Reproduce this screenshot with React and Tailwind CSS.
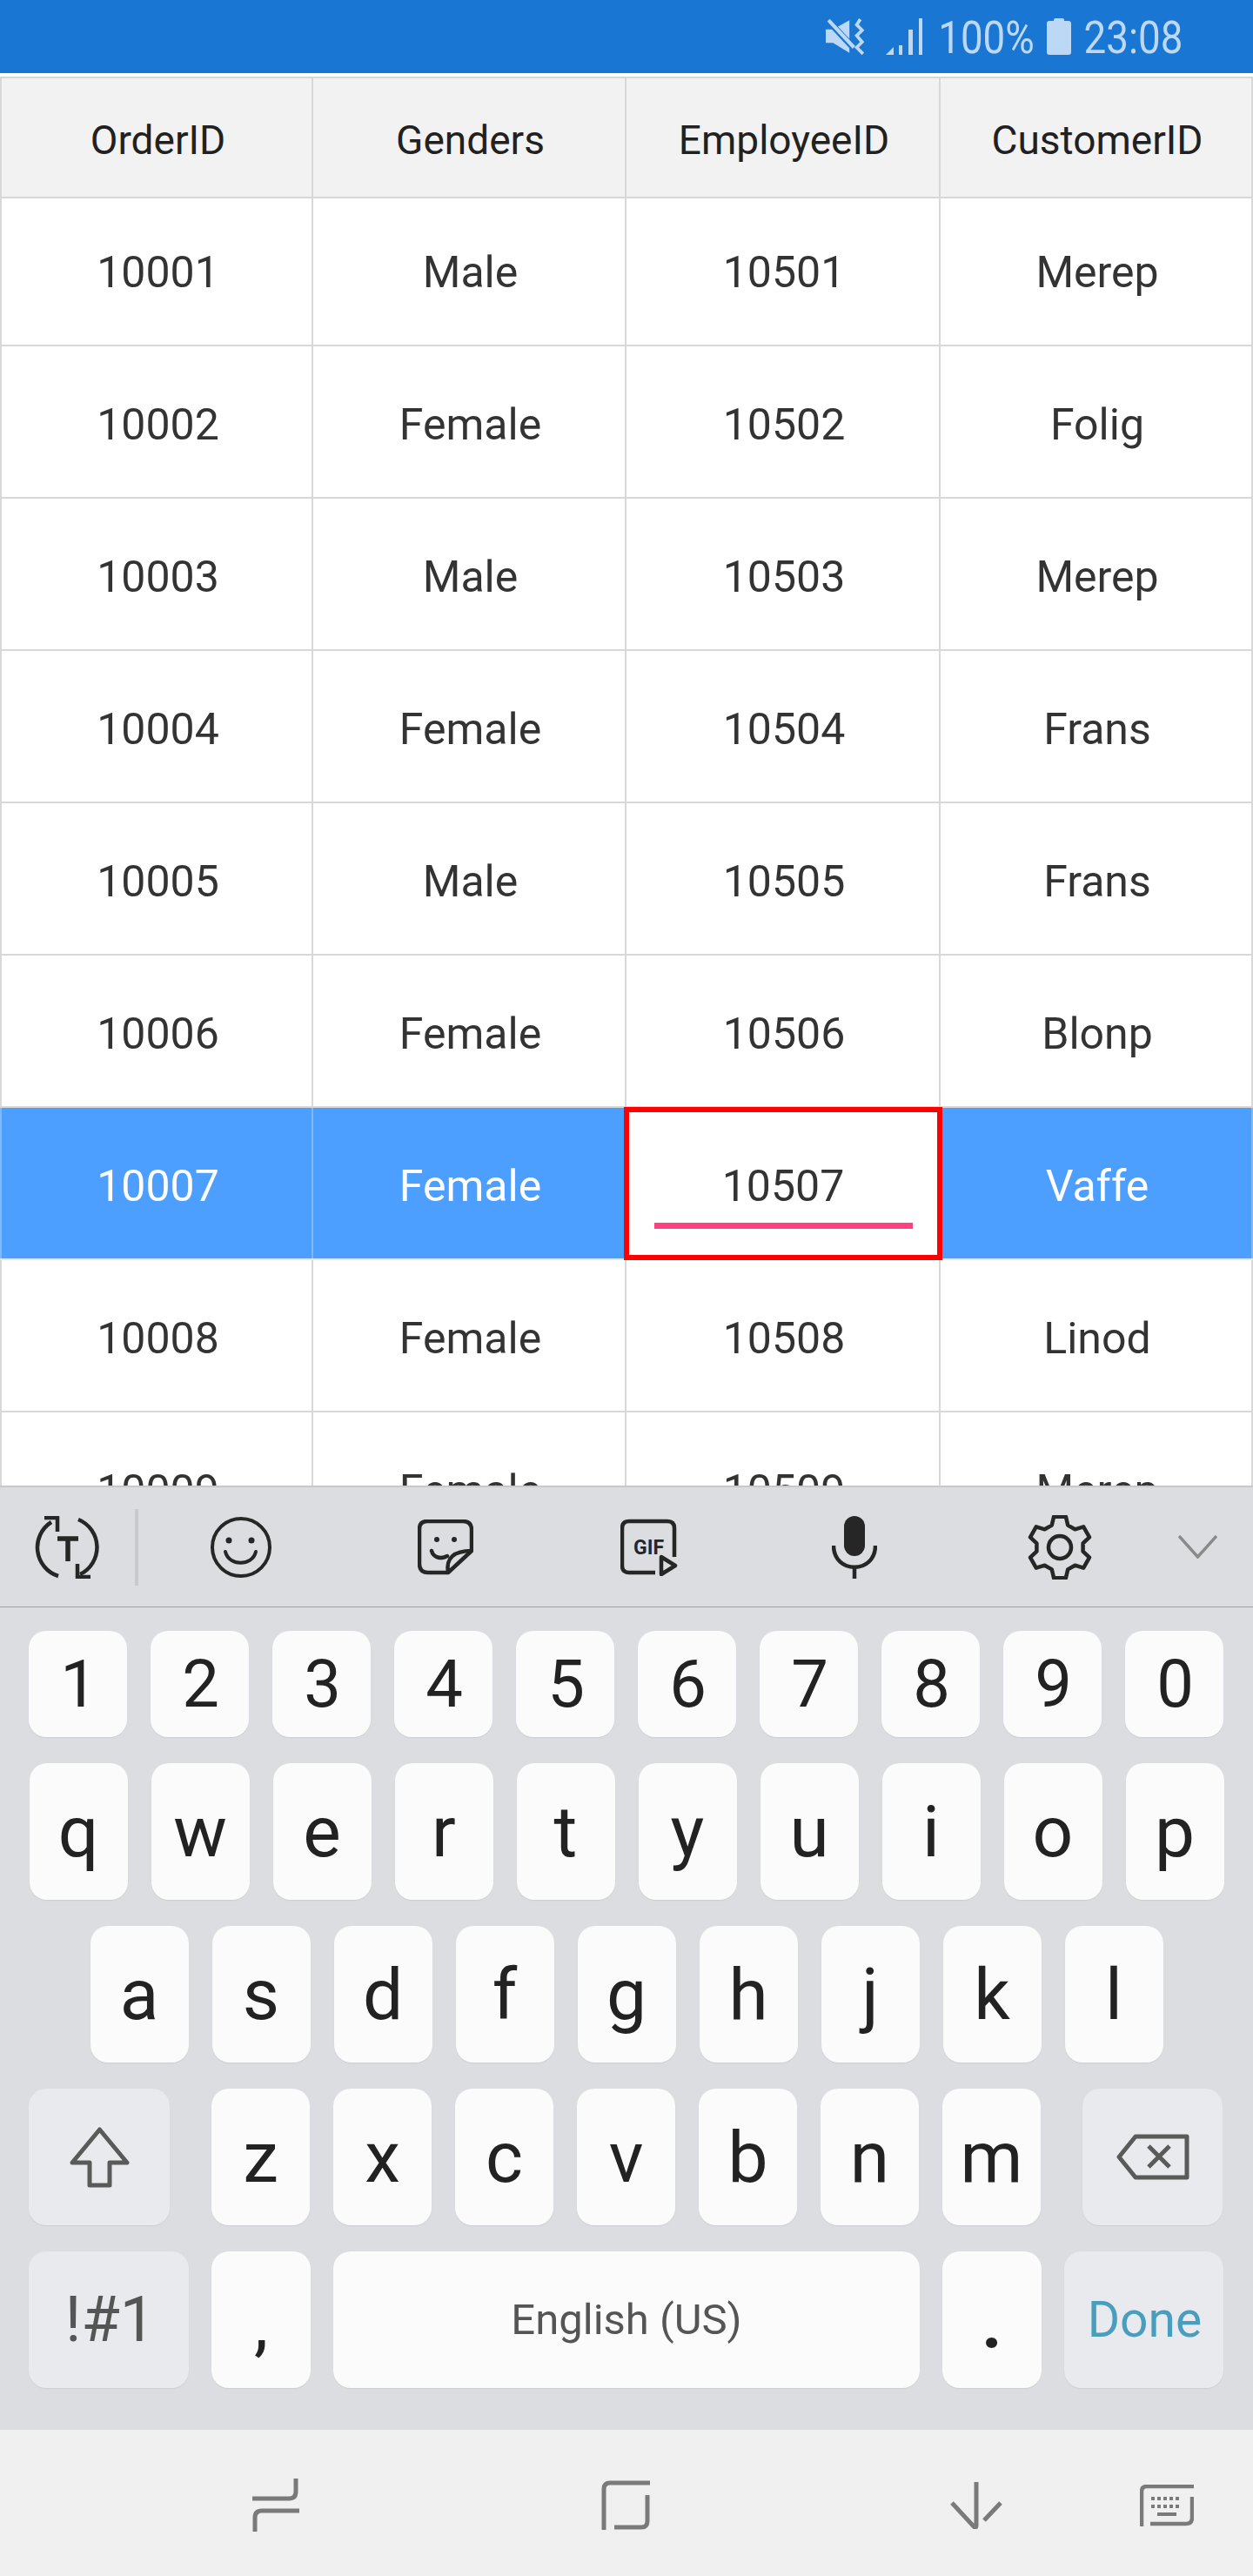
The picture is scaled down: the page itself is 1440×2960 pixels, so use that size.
import React from 'react';

const rows = [
  ['10001', 'Male', '10501', 'Merep'],
  ['10002', 'Female', '10502', 'Folig'],
  ['10003', 'Male', '10503', 'Merep'],
  ['10004', 'Female', '10504', 'Frans'],
  ['10005', 'Male', '10505', 'Frans'],
  ['10006', 'Female', '10506', 'Blonp'],
  ['10007', 'Female', '10507', 'Vaffe'],
  ['10008', 'Female', '10508', 'Linod'],
  ['10009', 'Female', '10509', 'Merep'],
];

const gridCols = 'grid grid-cols-[358px_360px_361px_361px]';

const gearPath = () => {
  const pts = [];
  for (let i = 0; i < 6; i++) {
    const a = -90 + i * 60;
    [[-20, 27], [-11, 36], [11, 36], [20, 27]].forEach(([d, r]) => {
      const t = ((a + d) * Math.PI) / 180;
      pts.push(`${(36 + r * Math.cos(t)).toFixed(1)} ${(37 + r * Math.sin(t)).toFixed(1)}`);
    });
  }
  return `M${pts.join('L')}Z`;
};

const Key = ({ children, className = 'w-[113px] bg-[#fbfbfb]', text = 'text-[82px] text-[#222222]' }) => (
  <div className={`${className} ${text} h-[157px] shrink-0 rounded-[20px] shadow-[0_1px_1px_#cdced2] flex items-center justify-center leading-none`}>
    {children}
  </div>
);

const DigitRow = () => (
  <div className="flex gap-[27px] pl-[33px] mt-[27px]">
    {['1', '2', '3', '4', '5', '6', '7', '8', '9', '0'].map((d) => (
      <div key={d} className="w-[113px] h-[122px] rounded-[20px] bg-[#fbfbfb] shadow-[0_1px_1px_#cdced2] flex items-center justify-center pl-[2px] text-[76px] leading-none text-[#222222]">
        {d}
      </div>
    ))}
  </div>
);

const LetterRow = ({ letters }) => (
  <div className="flex justify-center gap-[27px] mt-[30px]">
    {letters.map((l) => (
      <Key key={l}>{l}</Key>
    ))}
  </div>
);

const StatusBar = () => (
  <div className="h-[84px] bg-[#1976d2] flex items-center justify-end pr-[82px] text-[#bcd8f5]">
    <svg width="46" height="44" viewBox="0 0 44 42" className="mr-[23px]" fill="none">
      <path d="M0 13H8L26 3V39L8 28H0Z" fill="#bcd8f5" />
      <path d="M1 2L33 36" stroke="#1976d2" strokeWidth="7" />
      <path d="M3 3L31 33" stroke="#bcd8f5" strokeWidth="4" />
      <path d="M38 2L34 8L40 14L34 20L40 27L34 33L41 40" stroke="#bcd8f5" strokeWidth="3.5" />
    </svg>
    <svg width="42" height="42" viewBox="0 0 42 42" fill="#bcd8f5" className="mr-[19px]">
      <path d="M0 42L9 33V42Z" />
      <rect x="15" y="31" width="4" height="11" />
      <rect x="26" y="13" width="5" height="29" />
      <rect x="38" y="0" width="4" height="42" />
    </svg>
    <span className="font-['Roboto',sans-serif] text-[52px] leading-none pt-[4px] w-[109px] flex justify-center scale-x-[0.88] whitespace-nowrap">100%</span>
    <svg width="28" height="42" viewBox="0 0 28 42" fill="#bcd8f5" className="ml-[15px] mr-[16px]">
      <path d="M8 2Q8 0 10 0H18Q20 0 20 2V3H25Q28 3 28 6V39Q28 42 25 42H3Q0 42 0 39V6Q0 3 3 3H8Z" />
    </svg>
    <span className="font-['Roboto',sans-serif] text-[52px] leading-none pt-[4px] w-[111px] flex justify-center scale-x-[0.88] whitespace-nowrap">23:08</span>
  </div>
);

const Grid = () => (
  <div className="h-[1623px] overflow-hidden pt-[4px] bg-white">
    <div className={`${gridCols} h-[140px] border-y-2 border-[#d8d8d8] bg-[#f2f2f2] text-[#212121] text-[46px]`}>
      {['OrderID', 'Genders', 'EmployeeID', 'CustomerID'].map((h, i) => (
        <div key={h} className={`flex items-center justify-center pt-[7px] pl-[3px] border-l-2 border-[#d8d8d8] ${i === 3 ? 'border-r-2' : ''}`}>
          {h}
        </div>
      ))}
    </div>
    {rows.map((row, r) => {
      const selected = row[0] === '10007';
      return (
        <div
          key={row[0]}
          className={`${gridCols} ${r === 0 ? 'h-[170px]' : 'h-[175px]'} border-b-2 text-[50px] ${selected ? 'bg-[#4d9fff] text-white border-[#d8e8fa]' : 'bg-white text-[#333333] border-[#d8d8d8]'}`}
        >
          {row.map((cell, i) => (
            <div
              key={i}
              className={`relative flex items-center justify-center pl-[3px] ${r === 0 ? 'pt-[3px]' : 'pt-[8px]'} border-l-2 ${i === 3 ? 'border-r-2' : ''} ${selected ? 'border-[#7fb8fb]' : 'border-[#d8d8d8]'}`}
            >
              {selected && i === 2 ? (
                <div className="absolute -left-[3px] -right-[4px] -top-[1px] -bottom-[2px] z-10 border-[6px] border-[#ff0000] bg-white text-[#333333] flex flex-col items-center">
                  <span className="mt-[55px] leading-[60px]">{cell}</span>
                  <span className="w-[297px] h-[7px] mt-[12px] bg-[#ff4081]" />
                </div>
              ) : (
                cell
              )}
            </div>
          ))}
        </div>
      );
    })}
  </div>
);

const Toolbar = () => (
  <div className="h-[140px] border-t-2 border-b border-t-[#c8c8c8] border-b-[#a3a3a5] flex items-center pl-[40px] text-[#262626]">
    <svg width="74" height="72" viewBox="0 0 74 72" fill="none" stroke="currentColor" strokeWidth="4.5">
      <path d="M19 7A34.5 34.5 0 0 0 27 69" />
      <path d="M11 2H26V18" />
      <path d="M50 4A34.5 34.5 0 0 1 52 67" />
      <path d="M64 70H49V55" />
      <path d="M26 26H50M38 26V52" strokeWidth="5.5" />
    </svg>
    <div className="w-[4px] h-[88px] bg-[#c9c9cd] ml-[41px]" />
    <svg width="72" height="72" viewBox="0 0 72 72" fill="none" stroke="currentColor" strokeWidth="4" className="ml-[82px]">
      <circle cx="36" cy="36" r="33" />
      <circle cx="22" cy="28" r="3.5" fill="currentColor" stroke="none" />
      <circle cx="48" cy="28" r="3.5" fill="currentColor" stroke="none" />
      <path d="M18 41C22 58 49 58 53 41" strokeLinecap="round" />
    </svg>
    <svg width="64" height="64" viewBox="0 0 64 64" fill="none" stroke="currentColor" strokeWidth="4.5" className="ml-[167px]">
      <path d="M11 2H52Q62 2 62 12V36L35 61H12Q2 61 2 51V11Q2 2 11 2Z" strokeLinejoin="round" />
      <path d="M35 61C32 44 42 36 62 36" />
      <circle cx="22" cy="23" r="3" fill="currentColor" stroke="none" />
      <circle cx="42" cy="23" r="3" fill="currentColor" stroke="none" />
      <path d="M16 36C18 44 27 46 34 42" strokeLinecap="round" />
    </svg>
    <svg width="66" height="66" viewBox="0 0 66 66" fill="none" stroke="currentColor" strokeWidth="4.5" className="ml-[169px]">
      <path d="M62 44V11Q62 3 54 3H10Q2 3 2 11V54Q2 62 10 62H40" />
      <path d="M47 44L63 54L47 64Z" strokeLinejoin="round" />
      <text x="15" y="41" fontFamily="Roboto, sans-serif" fontWeight="700" fontSize="23" fill="currentColor" stroke="none">GIF</text>
    </svg>
    <svg width="52" height="72" viewBox="0 0 52 72" fill="none" stroke="currentColor" strokeWidth="4.5" className="ml-[177px]">
      <rect x="14" y="0" width="24" height="46" rx="12" fill="currentColor" stroke="none" />
      <path d="M2 34C2 67 50 67 50 34" />
      <path d="M26 57V72" />
    </svg>
    <svg width="74" height="74" viewBox="0 0 72 74" fill="none" stroke="currentColor" strokeWidth="4.5" className="ml-[173px]">
      <path d={gearPath()} strokeLinejoin="round" />
      <circle cx="36" cy="37" r="13" />
    </svg>
    <svg width="45" height="27" viewBox="0 0 45 27" fill="none" stroke="#8a8a8a" strokeWidth="3.5" className="ml-[99px]">
      <path d="M1 1L22.5 25L44 1" />
    </svg>
  </div>
);

const Keyboard = () => (
  <div className="h-[1085px] bg-[#dcdde1] font-['Roboto',sans-serif]">
    <Toolbar />
    <DigitRow />
    <LetterRow letters={['q', 'w', 'e', 'r', 't', 'y', 'u', 'i', 'o', 'p']} />
    <LetterRow letters={['a', 's', 'd', 'f', 'g', 'h', 'j', 'k', 'l']} />
    <div className="flex mt-[30px] pl-[33px]">
      <Key className="w-[162px] bg-[#e9eaee] mr-[48px]">
        <svg width="69" height="70" viewBox="0 0 69 70" fill="none" stroke="#5a5a5a" strokeWidth="5" strokeLinejoin="round">
          <path d="M34.5 3L66 41H46V67H23V41H3Z" />
        </svg>
      </Key>
      <div className="flex gap-[27px]">
        {['z', 'x', 'c', 'v', 'b', 'n', 'm'].map((l) => (
          <Key key={l}>{l}</Key>
        ))}
      </div>
      <Key className="w-[161px] bg-[#e9eaee] ml-[48px]">
        <svg width="84" height="53" viewBox="0 0 84 53" fill="none" stroke="#5a5a5a" strokeWidth="5" strokeLinejoin="round">
          <path d="M22 3H81V50H22L3 26.5Z" />
          <path d="M37 14L61 38M61 14L37 38" />
        </svg>
      </Key>
    </div>
    <div className="flex gap-[26px] mt-[30px] pl-[33px]">
      <Key className="w-[184px] bg-[#e9eaee] pl-[3px]" text="text-[72px] text-[#555555]">!#1</Key>
      <Key className="w-[114px] bg-[#fbfbfb] pt-[8px]">,</Key>
      <Key className="w-[674px] bg-[#fbfbfb]" text="text-[49px] text-[#555555]">English (US)</Key>
      <Key className="w-[114px] bg-[#fbfbfb] pt-[8px] font-bold">.</Key>
      <Key className="w-[183px] bg-[#e9eaee] pl-[2px]" text="text-[57px] text-[#4a9ebd]">Done</Key>
    </div>
  </div>
);

const NavBar = () => (
  <div className="h-[168px] bg-[#f0f0f0] flex items-start pl-[290px]">
    <svg width="54" height="61" viewBox="0 0 54 61" fill="none" stroke="#7a7a7a" strokeWidth="5" className="mt-[56px]">
      <path d="M50 0V15Q50 23 42 23H0" />
      <path d="M54 37H11Q3 37 3 45V61" />
    </svg>
    <svg width="56" height="57" viewBox="0 0 56 57" fill="none" stroke="#7a7a7a" strokeWidth="5" className="mt-[58px] ml-[347px]">
      <path d="M3 57V10Q3 3 10 3H56" />
      <path d="M53 17V47Q53 54 46 54H15" />
    </svg>
    <svg width="60" height="54" viewBox="0 0 60 54" fill="none" stroke="#7a7a7a" strokeWidth="5" className="mt-[60px] ml-[345px]">
      <path d="M30 0V50Q30 54 27 51L2 24" />
      <path d="M39 44L58 24" />
    </svg>
    <svg width="62" height="48" viewBox="0 0 62 48" fill="none" stroke="#7a7a7a" strokeWidth="4.5" className="mt-[63px] ml-[158px]">
      <path d="M2 48V8Q2 2 8 2H62" />
      <path d="M60 14V38Q60 45 53 45H12" />
      <path d="M13 16H45M13 25H45" strokeWidth="4" strokeDasharray="4 3" />
      <path d="M20 34H42" strokeWidth="4" />
    </svg>
  </div>
);

const App = () => (
  <div className="w-[1440px] h-[2960px] overflow-hidden bg-white font-['Roboto',sans-serif]">
    <StatusBar />
    <Grid />
    <Keyboard />
    <NavBar />
  </div>
);

export default App;
